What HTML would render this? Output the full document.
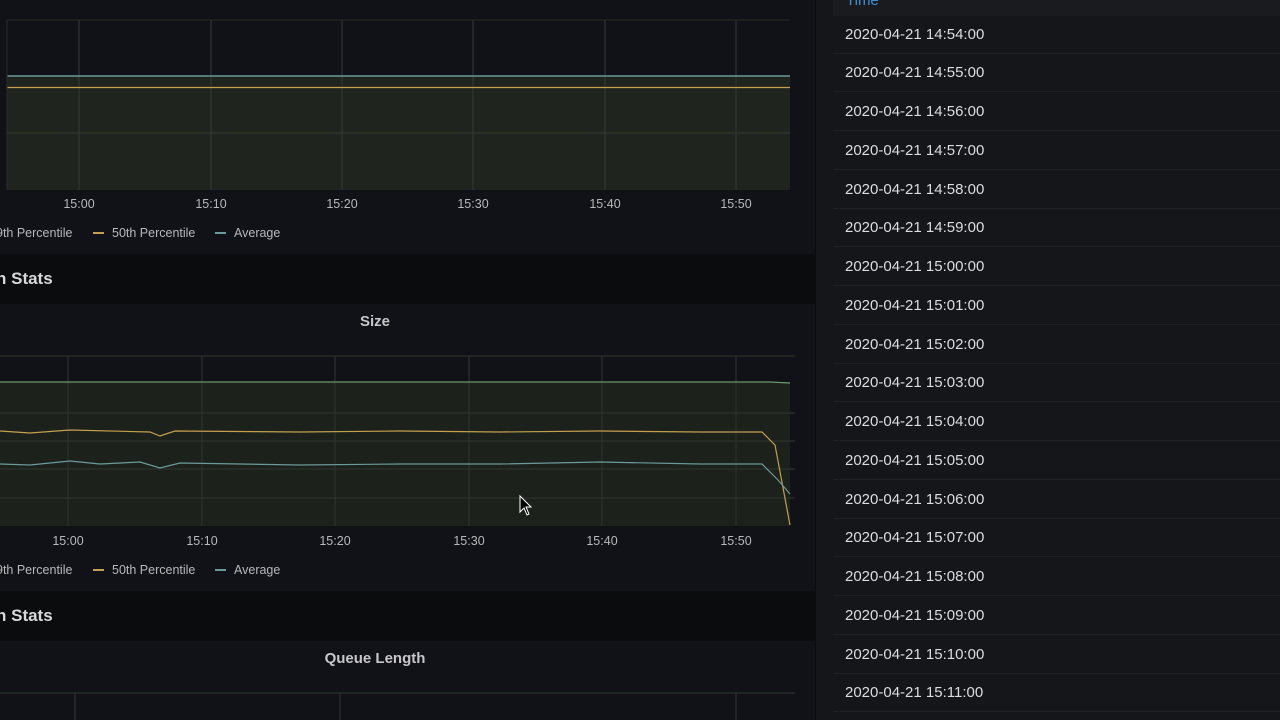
<!DOCTYPE html>
<html><head><meta charset="utf-8"><style>
body{margin:0;width:1280px;height:720px;overflow:hidden;background:#0b0c0e;font-family:"Liberation Sans",sans-serif;position:relative}
.abs{position:absolute}
.left{left:0;top:0;width:815px;height:720px;background:#111217}
.band{left:0;width:815px;height:50px;background:#0b0c0e;color:#d8d9da;font-size:17px;font-weight:bold;line-height:50px}
.title{color:#c7c7c9;font-size:15px;font-weight:bold;width:750px;text-align:center}
.lbl{color:#b7b8bb;font-size:12.5px}
.right{left:816px;top:0;width:464px;height:720px;background:#151619}
.row{left:833px;width:447px;height:38px;border-bottom:1px solid #1f2024;color:#dcdde0;font-size:15px;line-height:38px;padding-left:12px;box-sizing:border-box}
</style></head><body>
<div class="abs left"></div>
<svg class="abs" style="left:0;top:0" width="815" height="720">
<g stroke="#262a26" stroke-width="1">
<line x1="7" y1="20" x2="790" y2="20"/><line x1="7" y1="133" x2="790" y2="133"/>
</g>
<rect x="7" y="76" width="783" height="114" fill="#20241f"/>
<g stroke="#343a31" stroke-width="1">
<line x1="7" y1="133" x2="790" y2="133"/>
<line x1="79" y1="20" x2="79" y2="190"/><line x1="211" y1="20" x2="211" y2="190"/><line x1="342" y1="20" x2="342" y2="190"/><line x1="473" y1="20" x2="473" y2="190"/><line x1="605" y1="20" x2="605" y2="190"/><line x1="736" y1="20" x2="736" y2="190"/>
</g>
<line x1="7" y1="76" x2="790" y2="76" stroke="#6a9a9c" stroke-width="1.5"/>
<line x1="7" y1="87.5" x2="790" y2="87.5" stroke="#c4a04e" stroke-width="1.2"/>
<line x1="7" y1="20" x2="7" y2="190" stroke="#2a2d2a"/>
<rect x="0" y="382" width="790" height="144" fill="#1d211c"/>
<g stroke="#30352e" stroke-width="1">
<line x1="0" y1="356" x2="795" y2="356"/><line x1="0" y1="413" x2="795" y2="413"/><line x1="0" y1="441" x2="795" y2="441"/><line x1="0" y1="469" x2="795" y2="469"/><line x1="0" y1="498" x2="795" y2="498"/>
<line x1="68" y1="356" x2="68" y2="526"/><line x1="202" y1="356" x2="202" y2="526"/><line x1="335" y1="356" x2="335" y2="526"/><line x1="469" y1="356" x2="469" y2="526"/><line x1="602" y1="356" x2="602" y2="526"/><line x1="736" y1="356" x2="736" y2="526"/>
</g>
<polyline points="0,382 770,382 790,383" fill="none" stroke="#6b9a6a" stroke-width="1.2"/>
<polyline points="0,431 30,433 70,430 150,432 160,436 175,431 300,432 400,431 500,432 600,431 700,432 762,432 775,445 790,525" fill="none" stroke="#c4a04e" stroke-width="1.2"/>
<polyline points="0,464 30,465 70,461 100,464 140,462 160,468 180,463 300,465 400,464 500,464 600,462 700,464 762,464 778,480 790,494" fill="none" stroke="#6a9a9c" stroke-width="1.2"/>
<g stroke="#30352e"><line x1="0" y1="693" x2="795" y2="693"/><line x1="75" y1="693" x2="75" y2="720"/><line x1="340" y1="693" x2="340" y2="720"/><line x1="736" y1="693" x2="736" y2="720"/></g>
<g fill="#b7b8bb" font-size="12.5" font-family="Liberation Sans" text-anchor="middle">
<text x="79" y="208">15:00</text><text x="211" y="208">15:10</text><text x="342" y="208">15:20</text><text x="473" y="208">15:30</text><text x="605" y="208">15:40</text><text x="736" y="208">15:50</text>
<text x="68" y="545">15:00</text><text x="202" y="545">15:10</text><text x="335" y="545">15:20</text><text x="469" y="545">15:30</text><text x="602" y="545">15:40</text><text x="736" y="545">15:50</text>
</g>
<g font-size="12.5" font-family="Liberation Sans" fill="#b7b8bb">
<text x="-4" y="237">9th Percentile</text><line x1="93" y1="233" x2="104" y2="233" stroke="#c4a04e" stroke-width="2"/><text x="112" y="237">50th Percentile</text><line x1="215" y1="233" x2="226" y2="233" stroke="#6a9a9c" stroke-width="2"/><text x="234" y="237">Average</text>
<text x="-4" y="574">9th Percentile</text><line x1="93" y1="570" x2="104" y2="570" stroke="#c4a04e" stroke-width="2"/><text x="112" y="574">50th Percentile</text><line x1="215" y1="570" x2="226" y2="570" stroke="#6a9a9c" stroke-width="2"/><text x="234" y="574">Average</text>
</g>
<path d="M520 496 L520 512 L524 508 L527 515 L529 514 L526 507 L531 507 Z" fill="#000" stroke="#fff" stroke-width="1"/>
</svg>
<div class="abs band" style="top:254px"><span style="margin-left:-4px">h Stats</span></div>
<div class="abs band" style="top:591px"><span style="margin-left:-4px">h Stats</span></div>
<div class="abs title" style="left:0;top:313px">Size</div>
<div class="abs title" style="left:0;top:650px">Queue Length</div>
<div class="abs right"></div>
<div class="abs" style="left:833px;top:0;width:447px;height:16px;background:#1a1b1f;color:#3d8fd1;font-size:15px;line-height:2px;padding-left:13px;box-sizing:border-box">Time</div>
<div class="abs row" style="top:16px">2020-04-21 14:54:00</div>
<div class="abs row" style="top:54px">2020-04-21 14:55:00</div>
<div class="abs row" style="top:93px">2020-04-21 14:56:00</div>
<div class="abs row" style="top:132px">2020-04-21 14:57:00</div>
<div class="abs row" style="top:171px">2020-04-21 14:58:00</div>
<div class="abs row" style="top:209px">2020-04-21 14:59:00</div>
<div class="abs row" style="top:248px">2020-04-21 15:00:00</div>
<div class="abs row" style="top:287px">2020-04-21 15:01:00</div>
<div class="abs row" style="top:326px">2020-04-21 15:02:00</div>
<div class="abs row" style="top:364px">2020-04-21 15:03:00</div>
<div class="abs row" style="top:403px">2020-04-21 15:04:00</div>
<div class="abs row" style="top:442px">2020-04-21 15:05:00</div>
<div class="abs row" style="top:481px">2020-04-21 15:06:00</div>
<div class="abs row" style="top:519px">2020-04-21 15:07:00</div>
<div class="abs row" style="top:558px">2020-04-21 15:08:00</div>
<div class="abs row" style="top:597px">2020-04-21 15:09:00</div>
<div class="abs row" style="top:636px">2020-04-21 15:10:00</div>
<div class="abs row" style="top:674px">2020-04-21 15:11:00</div>
</body></html>
